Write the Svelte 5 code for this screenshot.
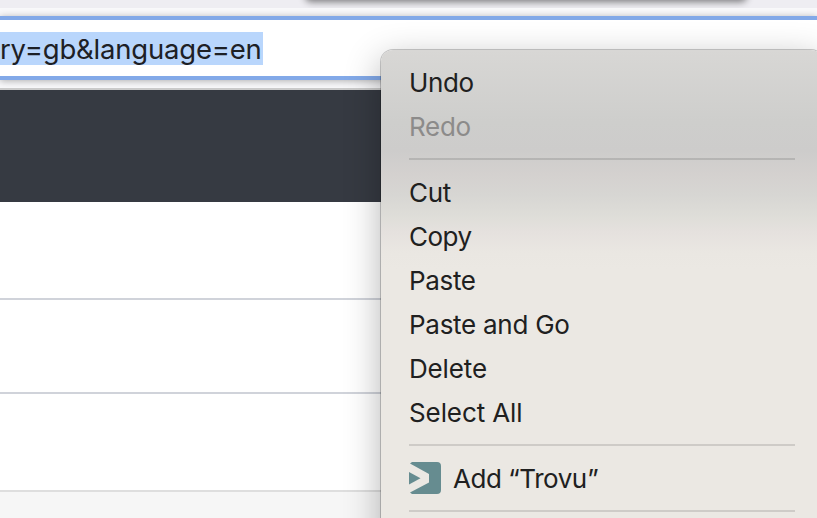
<script>
  const groups = [
    [
      { label: 'Undo', tracking: -0.4 },
      { label: 'Redo', tracking: -0.3, disabled: true },
    ],
    [
      { label: 'Cut', tracking: -0.3 },
      { label: 'Copy', tracking: -0.5 },
      { label: 'Paste', tracking: -0.35 },
      { label: 'Paste and Go', tracking: -0.27 },
      { label: 'Delete', tracking: -0.15 },
      { label: 'Select All', tracking: -0.1 },
    ],
    [{ label: 'Add “Trovu”', tracking: -0.45, icon: true }],
  ];
</script>

<main>
  <div class="tabs"><div class="tab-card"></div></div>
  <div class="toolbar">
    <div class="address"><span class="selected">ry=gb&amp;language=en</span></div>
  </div>
  <div class="banner"></div>
  <div class="row first"></div>
  <div class="row second"></div>
  <div class="row third"></div>
  <div class="footer"></div>

  <div class="menu" role="menu">
    {#each groups as group}
      {#each group as item}
        <div class="item" class:disabled={item.disabled} role="menuitem" tabindex="-1">
          {#if item.icon}
            <svg width="32" height="32" viewBox="0 0 32 32" aria-hidden="true">
              <path fill="#668c90" d="M3 0H28Q32 0 32 4V28Q32 32 28 32H3L1 30.5L20 20.5V12L1 1.5Z" />
              <path fill="#668c90" d="M0 10L11.5 16.2L0 22.5Z" />
            </svg>
          {/if}
          <span style="letter-spacing: {item.tracking}px">{item.label}</span>
        </div>
      {/each}
      <div class="separator"></div>
    {/each}
  </div>
</main>

<style>
  :global(body) { margin: 0; }
  main {
    position: relative;
    display: flex;
    flex-direction: column;
    width: 817px;
    height: 518px;
    overflow: hidden;
    background: #fff;
    font-family: Inter, "Liberation Sans", sans-serif;
    font-size: 26px;
    color: #202020;
  }
  main > div { box-sizing: border-box; flex-shrink: 0; }
  .tabs { height: 8px; background: #eeedf2; overflow: hidden; }
  .tab-card {
    width: 440px;
    height: 10px;
    margin: -10px 0 0 306px;
    border-radius: 6px;
    box-shadow: 0 1px 7px 1px rgba(0, 0, 0, .48);
  }
  .toolbar {
    height: 82px;
    padding-top: 8px;
    background: #f8f8fa;
    border-bottom: 2px solid #cbcbcb;
  }
  .address {
    box-sizing: border-box;
    display: flex;
    align-items: center;
    height: 64px;
    border: solid #82a9e8;
    border-width: 4px 0;
    background: #fff;
    box-shadow: 0 1px 7px rgba(0, 0, 0, .3);
  }
  .selected {
    width: 263px;
    height: 33px;
    margin-top: 1px;
    line-height: 34px;
    background: #b9d6fc;
    color: #1d2025;
    white-space: nowrap;
    font-size: 27.5px;
    letter-spacing: -0.2px;
  }
  .banner { height: 112px; background: #363a42; }
  .row { border-bottom: 2px solid #d0d3da; }
  .first { height: 98px; }
  .second { height: 94px; }
  .third { height: 98px; border-color: #dedede; }
  .footer { height: 26px; background: #f6f6f6; }
  .menu {
    position: absolute;
    left: 381px;
    top: 50px;
    width: 442px;
    height: 500px;
    padding: 11px 28px 0;
    border-radius: 12px;
    background: linear-gradient(#d8d7d5 0, #cececc 72px, #cdcccb 100px, #d4d1cf 125px, #d7d6d3 145px, #dfded9 168px, #e5e1de 182px, #eae7e2 203px, #ebe8e3 220px);
    box-shadow: 0 0 0 1px rgba(0, 0, 0, .2), 0 10px 36px rgba(0, 0, 0, .3);
  }
  .item { box-sizing: border-box; display: flex; align-items: center; height: 44px; padding-bottom: 2px; white-space: nowrap; }
  .disabled { color: #8c8b8a; }
  .separator { height: 2px; margin: 9px 0 11px; background: rgba(0, 0, 0, .12); }
  svg { margin-right: 12px; }
</style>
